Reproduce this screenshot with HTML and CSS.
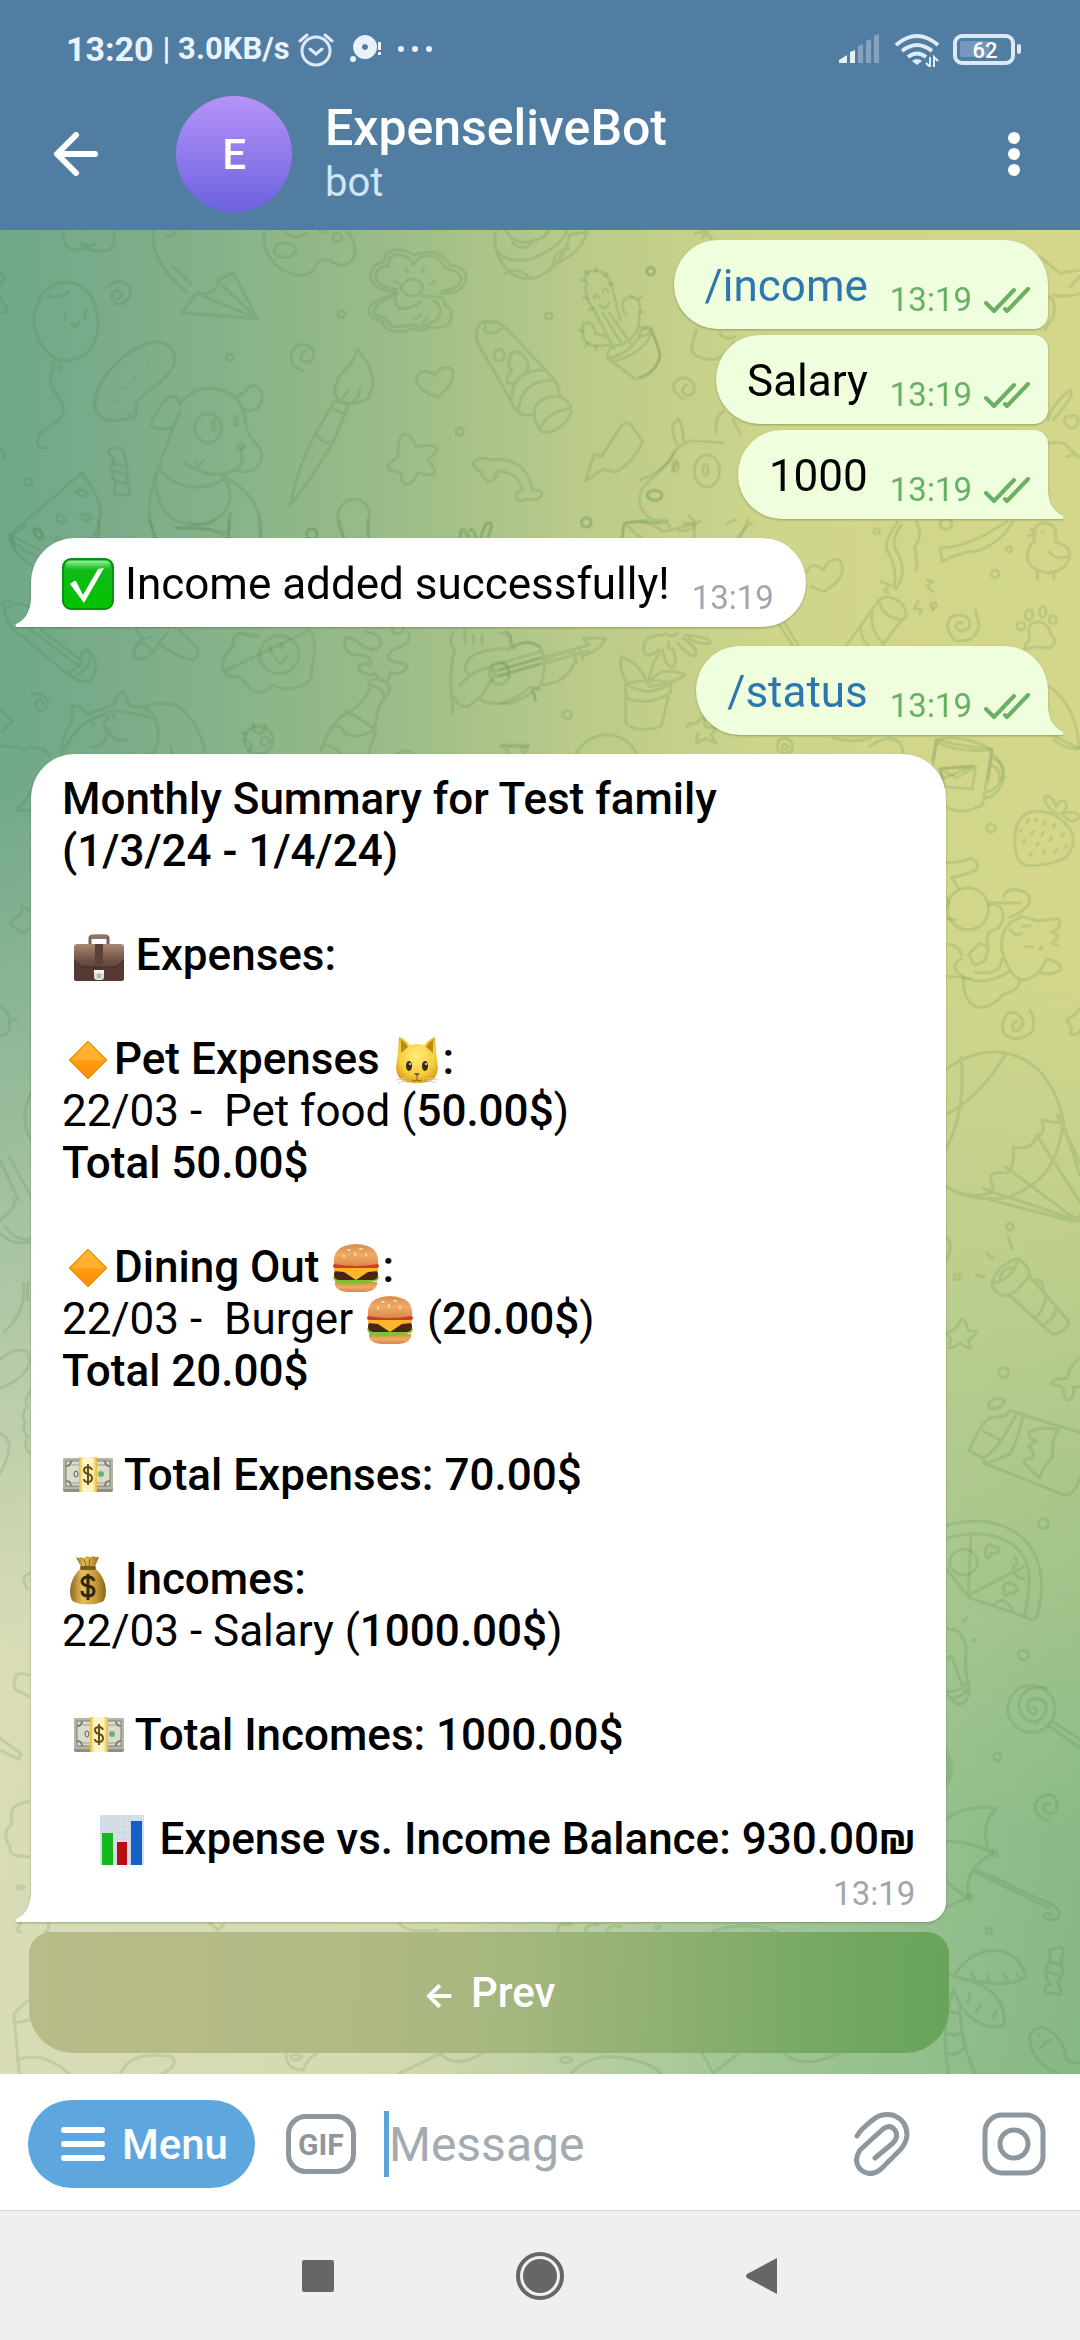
FILE: index.html
```html
<!DOCTYPE html>
<html lang="en">
<head>
<meta charset="utf-8">
<meta name="viewport" content="width=device-width, initial-scale=1">
<title>ExpenseliveBot</title>
<link rel="stylesheet" href="styles.css">
</head>
<body>

<svg class="sprite" width="0" height="0" aria-hidden="true">
  <defs>
    <linearGradient id="g-check" x1="0" y1="0" x2="0" y2="1"><stop offset="0" stop-color="#3fd34a"/><stop offset=".2" stop-color="#10b91a"/><stop offset="1" stop-color="#00c400"/></linearGradient>
    <linearGradient id="g-gloss" x1="0" y1="0" x2="0" y2="1"><stop offset="0" stop-color="#9df0a0"/><stop offset="1" stop-color="#2fc93a" stop-opacity=".2"/></linearGradient>
    <linearGradient id="g-case" x1="0" y1="0" x2="0" y2="1"><stop offset="0" stop-color="#a98871"/><stop offset=".45" stop-color="#6d5045"/><stop offset="1" stop-color="#48302a"/></linearGradient>
    <linearGradient id="g-diamond" x1="0" y1="0" x2="0" y2="1"><stop offset="0" stop-color="#ffb327"/><stop offset="1" stop-color="#ff8a00"/></linearGradient>
    <radialGradient id="g-cat" cx=".5" cy=".4" r=".6"><stop offset="0" stop-color="#ffec7a"/><stop offset=".7" stop-color="#f6cf3c"/><stop offset="1" stop-color="#dba51c"/></radialGradient>
    <linearGradient id="g-bun" x1="0" y1="0" x2="0" y2="1"><stop offset="0" stop-color="#d98d4b"/><stop offset=".5" stop-color="#efab66"/><stop offset="1" stop-color="#d58a48"/></linearGradient>
    <linearGradient id="g-bag" x1="0" y1="0" x2="1" y2="0"><stop offset="0" stop-color="#8f6a1c"/><stop offset=".35" stop-color="#e2bd5c"/><stop offset=".7" stop-color="#c99c3a"/><stop offset="1" stop-color="#8a6519"/></linearGradient>
    <linearGradient id="g-band" x1="0" y1="0" x2="1" y2="0"><stop offset="0" stop-color="#e9b92c"/><stop offset=".25" stop-color="#fdf6cf"/><stop offset=".75" stop-color="#fdf3bd"/><stop offset="1" stop-color="#e9b92c"/></linearGradient>
  </defs>

  <symbol id="e-check" viewBox="0 0 52 52">
    <rect x="1" y="1" width="50" height="50" rx="8" fill="url(#g-check)" stroke="#0a8f14" stroke-width="2"/>
    <rect x="4" y="3" width="44" height="9" rx="4" fill="url(#g-gloss)"/>
    <path d="M8 26l4-3q2-1 3 2l6 12L36 11l6-1L22 45z" fill="#fff"/>
  </symbol>

  <symbol id="e-case" viewBox="0 0 52 52">
    <path d="M17 15V9q0-2 3-2h12q3 0 3 2v6" fill="none" stroke="#7b6259" stroke-width="3"/>
    <path d="M18 7q8-3 16 0v3H18z" fill="#8e7469"/>
    <rect x="1" y="15" width="50" height="37" rx="3" fill="url(#g-case)"/>
    <path d="M1 32l8 7h34l8-7v17q0 3-3 3H4q-3 0-3-3z" fill="#553a32"/>
    <path d="M1 31l8 7h34l8-7" fill="none" stroke="#3a2520" stroke-width="1"/>
    <rect x="22" y="15" width="8" height="20" fill="#5c4138"/>
    <path d="M21 41h10v7q0 3-3 3h-4q-3 0-3-3z" fill="#e4dcd8"/>
    <path d="M21 41h10v3H21z" fill="#f6f2f0"/>
    <rect x="24" y="45" width="4" height="4" fill="#b8b0ac"/>
  </symbol>

  <symbol id="e-diamond" viewBox="0 0 52 52">
    <path d="M26 8L45 27 26 46 7 27z" fill="url(#g-diamond)" stroke="#e8860c" stroke-width="1" stroke-linejoin="round"/>
    <path d="M26 11L42 27H10z" fill="#ffc04a" opacity=".45"/>
  </symbol>

  <symbol id="e-cat" viewBox="0 0 52 52">
    <path d="M8 4q6 2 11 8 7-2 14 0 5-6 11-8l1 15q1 8 2 16-1 12-10 14-11 2-22 0Q6 47 5 35q1-8 2-16z" fill="url(#g-cat)"/>
    <path d="M10 7q5 2 7 7l-7 6zM42 7q-5 2-7 7l7 6z" fill="#b98a1c"/>
    <ellipse cx="18" cy="33" rx="3" ry="5" fill="#3b2a12"/>
    <ellipse cx="34" cy="33" rx="3" ry="5" fill="#3b2a12"/>
    <circle cx="19" cy="31" r="1" fill="#fff"/><circle cx="35" cy="31" r="1" fill="#fff"/>
    <path d="M23 40h6l-3 4z" fill="#7d5a4b"/>
    <path d="M26 44v3M26 47q-3 2-5 0M26 47q3 2 5 0" fill="none" stroke="#8a6412" stroke-width="1"/>
    <path d="M15 45L5 47M16 47l-9 3M37 45l10 2M36 47l9 3" stroke="#d8cfb0" stroke-width="1"/>
  </symbol>

  <symbol id="e-burger" viewBox="0 0 52 52">
    <path d="M5 41h42v3q-2 6-12 7H17Q7 50 5 44z" fill="url(#g-bun)"/>
    <path d="M3 36q3-3 8-2h30q5-1 8 2-1 5-5 4-4 4-8 1-5 4-9 1-5 4-9 0-5 3-8 0-5 1-7-6z" fill="#7cc331"/>
    <rect x="4" y="28" width="44" height="11" rx="5" fill="#4b2413"/>
    <path d="M4 27h44v3l-10 1-12 8-12-8-10-1z" fill="#fbb62a"/>
    <rect x="3" y="23" width="46" height="4" rx="2" fill="#d2392b"/>
    <path d="M4 23Q2 4 26 3q24 1 22 20-22 4-44 0z" fill="url(#g-bun)"/>
    <g fill="#f8dcae"><ellipse cx="19" cy="9" rx="2" ry="1"/><ellipse cx="31" cy="8" rx="2" ry="1"/><ellipse cx="25" cy="13" rx="1" ry="2"/><ellipse cx="36" cy="14" rx="1" ry="2"/><ellipse cx="14" cy="15" rx="1" ry="2"/></g>
  </symbol>

  <symbol id="e-money" viewBox="0 0 52 52">
    <rect x="1" y="11" width="50" height="32" rx="2" fill="#8f8f84"/>
    <rect x="1" y="9" width="50" height="31" rx="1" fill="#b5b6a8"/>
    <rect x="4" y="12" width="44" height="25" fill="#dcdccb" stroke="#7f8075" stroke-width="1"/>
    <path d="M4 17q5 0 5-5M43 12q0 5 5 5M4 32q5 0 5 5M43 37q0-5 5-5" fill="none" stroke="#7f8075" stroke-width="2"/>
    <ellipse cx="14" cy="25" rx="2" ry="3" fill="none" stroke="#5e6058" stroke-width="1"/>
    <circle cx="39" cy="25" r="3" fill="#6fae7d"/>
    <path d="M10 16h7M35 16h8M10 34h7M35 34h8" stroke="#9a9b8e" stroke-width="1"/>
    <rect x="17" y="8" width="18" height="35" fill="url(#g-band)"/>
    <path d="M30 21q-1-3-4-3-4 0-4 3 0 3 4 4t4 4q0 4-4 4t-4-3M26 15v21" fill="none" stroke="#6b4c10" stroke-width="2"/>
  </symbol>

  <symbol id="e-bag" viewBox="0 0 52 52">
    <path d="M14 4q3 2 5 0 3 2 6-1 3 2 6 0 3 2 6 1l-5 12H20z" fill="url(#g-bag)"/>
    <path d="M19 15h14q10 9 11 22 0 10-4 12-14 5-28 0-4-2-4-12 1-13 11-22z" fill="url(#g-bag)"/>
    <rect x="18" y="13" width="16" height="4" rx="2" fill="#7c5a18"/>
    <path d="M22 6l2 7M28 6l-1 7" stroke="#8b671d" stroke-width="1"/>
    <path d="M32 28q-1-4-6-4t-6 4q0 4 6 5t6 5q0 5-6 5t-6-5M26 21v26" fill="none" stroke="#33260f" stroke-width="3"/>
  </symbol>

  <symbol id="e-chart" viewBox="0 0 52 52">
    <rect x="4" y="2" width="44" height="51" fill="#d5dfe8"/>
    <path d="M4 8h44M4 14h44M4 20h44M4 26h44M4 32h44M4 38h44M4 44h44M10 2v50M16 2v50M22 2v50M28 2v50M34 2v50" stroke="#cbd6e1" stroke-width="1"/>
    <rect x="6" y="20" width="11" height="32" fill="#14b71e"/>
    <rect x="21" y="29" width="10" height="23" fill="#b80f14"/>
    <rect x="35" y="8" width="11" height="44" fill="#1560c4"/>
  </symbol>

  <symbol id="i-read" viewBox="0 0 46 26">
    <path d="M2 16l8 8L30 3M21 22l2 2L44 2" fill="none" stroke="currentColor" stroke-width="4" stroke-linecap="round" stroke-linejoin="round"/>
  </symbol>
  <symbol id="i-tail" viewBox="0 0 17 28">
    <path d="M17 0H16C15 13 10 21 1 25Q-1 28 3 28H17z" fill="currentColor"/>
  </symbol>
</svg>

<header class="header">
  <div class="status">
    <span class="status-time">13:20</span>
    <span class="status-rate">| 3.0KB/s</span>
    <svg class="status-notes" width="134" height="36" viewBox="0 0 134 36" aria-hidden="true">
      <g fill="none" stroke="#dfeaf7" stroke-width="3" stroke-linecap="round">
        <circle cx="18" cy="20" r="14"/><path d="M12 18l6 5 6-5M2 10l7-6M34 10l-7-6"/>
      </g>
      <g fill="#eaf1fb">
        <path fill-rule="evenodd" d="M67 4a12 12 0 1 0 .1 0zM67 13a3 3 0 1 1-.1 0z"/>
        <circle cx="55" cy="28" r="3"/><path d="M80 11h3v8h-3zM80 21h3v3h-3z"/>
        <circle cx="103" cy="18" r="3"/><circle cx="117" cy="18" r="3"/><circle cx="131" cy="18" r="3"/>
      </g>
    </svg>
    <svg class="status-signal" width="182" height="36" viewBox="0 0 182 36" role="img" aria-label="Signal, Wi-Fi, battery">
      <g fill="#e6eff9">
        <path d="M0 32v-3l8-5v8zM11 32V21l5-2v13z"/>
        <path opacity=".35" d="M19 32V15l5-2v19zM27 32V10l5-2v24zM35 32V5l5-2v29z"/>
      </g>
      <g fill="none" stroke="#e0ebf8" stroke-width="4">
        <path d="M57 14q21-18 42 0M63 20q15-12 30 0M69 26q9-7 18 0"/>
      </g>
      <path d="M73 30q5-4 10 0l-5 4z" fill="#e0ebf8"/>
      <path d="M91 26v10l-4-4M95 36V26l4 4" fill="none" stroke="#e0ebf8" stroke-width="2"/>
      <rect x="116" y="5" width="58" height="27" rx="7" fill="none" stroke="#dce8f8" stroke-width="4"/>
      <rect x="121" y="10" width="30" height="16" rx="2" fill="#7497bb"/>
      <rect x="178" y="13" width="4" height="10" rx="2" fill="#dce8f8"/>
      <text class="battery-level" x="146" y="27" text-anchor="middle">62</text>
    </svg>
  </div>
  <div class="appbar">
    <button class="icon-button" type="button" aria-label="Back">
      <svg width="44" height="44" viewBox="0 0 44 44"><path d="M22 3L3 22l19 19M4 22h37" fill="none" stroke="#fff" stroke-width="6" stroke-linecap="round" stroke-linejoin="round"/></svg>
    </button>
    <span class="avatar" aria-hidden="true">E</span>
    <div class="peer">
      <h1 class="peer-name">ExpenseliveBot</h1>
      <p class="peer-kind">bot</p>
    </div>
    <button class="icon-button" type="button" aria-label="More options">
      <svg width="12" height="44" viewBox="0 0 12 44" fill="#fff"><circle cx="6" cy="6" r="6"/><circle cx="6" cy="22" r="6"/><circle cx="6" cy="38" r="6"/></svg>
    </button>
  </div>
</header>

<main class="chat">
  <svg class="doodles" viewBox="0 230 1080 1844" preserveAspectRatio="xMidYMin slice" aria-hidden="true">
    <g transform="translate(0 230) scale(.4337 .3333)">
      <path d="M147 5Q140 55 175 60 190 60 195 50 215 70 250 60 270 45 262 5M187 40Q205 55 220 40M-5 125Q20 140 0 165M0 200L18 240Q10 252 -5 248M-5 650Q12 660 8 682"/>
      <path d="M152 157C95 160 72 240 80 295 90 350 118 392 152 392 200 392 228 340 226 275 222 200 195 157 152 157zM112 200Q145 205 157 185M150 247v25M198 242l-3 23M165 280Q172 300 182 278M130 392q-16 10-8 24l10-4 6 6 5-10-6-14M122 415C100 490 155 500 145 550 135 590 90 590 86 630 85 650 92 655 106 654"/>
      <path d="M253 168Q265 150 285 156 307 170 298 200 288 228 268 222 250 200 262 184 276 178 282 196 278 206 270 206"/>
      <path d="M355-5Q340 90 432 187M385 20Q410 15 403-5M398 108l42 52M420 248l34-60Q500 200 502 152L538 128 593 266zM455 190l138 76-91-113"/>
      <path d="M610-5Q600 90 665 128 710 150 728 110 738 75 770 98 800 120 817 80 825 40 795-5M655 0Q675 35 705 12M735 0q8 12 16 0"/>
      <ellipse cx="657" cy="60" rx="25" ry="22"/><ellipse cx="778" cy="22" rx="11" ry="12"/>
      <path d="M915 188Q850 180 855 130 860 100 885 95 890 55 920 60 940 62 955 75 1000 55 1020 80 1035 95 1036 105 1080 110 1074 155 1060 195 1015 190M915 180Q870 170 865 140 868 110 895 108 895 70 925 75 945 80 953 105 970 65 1005 82 1022 95 1025 115 1060 120 1064 150 1055 180 1020 182"/>
      <path d="M933 190Q915 175 935 155 950 140 968 155 982 175 965 192 945 205 933 190zM915 190Q905 215 920 235 945 240 970 215M915 192Q850 210 850 245 855 270 880 272 890 305 915 305 940 305 950 295 975 310 990 292 1040 300 1040 260 1045 235 1025 225 1030 195 990 200L965 195M905 200Q865 220 862 248 868 262 888 262 900 295 920 290 940 290 950 282 975 300 990 280 1010 275 1015 250 1020 225 1000 212M955 268l15-12M975 280l10-18M935 115l5 12M977 115l-5 12M910 155l10 5M1003 155l-12 5"/>
      <path d="M1145-5C1130 60 1165 145 1215 146 1270 145 1310 60 1312 15M1165-5Q1180 45 1220 35 1260 25 1265 0M1145 65Q1180 105 1230 85 1300 45 1310-5M1275 105Q1340 70 1354 5L1312 15M1275 105Q1280 60 1312 55M1165 130Q1185 105 1222 142M1180 38q30 30 45 0"/>
      <path d="M1350 150Q1345 120 1375 122 1400 125 1410 165L1430 270M1352 160Q1345 200 1370 240L1415 355M1435 215Q1445 195 1465 203 1480 220 1475 250L1470 310M1435 215Q1435 245 1445 255M1345 280Q1335 350 1380 348L1405 345M1345 280Q1370 270 1372 310L1400 320M1390 250l45 95M1405 250l50 90M1402 385Q1460 370 1480 300 1495 280 1505 305L1522 375Q1510 440 1465 447L1402 385Q1395 350 1430 345 1460 330 1470 295M1410 395Q1480 375 1502 312M1370 205q5-18 12 0M1390 185q6-18 12 0M1383 225q12 20 22-5"/>
      <path d="M1340 150l10 3M1350 125l6 8M1375 115v8M1400 130l-6 8M1412 160l-8 4M1345 205l10 0M1358 240l9-5M1335 300l10 3M1350 350l5-8M1375 358v-9M1478 200l-6 8M1482 245l-8 0M1455 195l3 9"/>
      <path d="M1100 335C1095 290 1105 272 1128 272 1150 272 1165 290 1175 305L1265 430Q1290 460 1290 500 1320 520 1317 545 1310 580 1280 600 1255 615 1245 600 1232 570 1232 555 1200 560 1190 540zM1118 295Q1120 315 1140 308 1165 295 1158 285 1140 272 1118 280zM1180 370Q1165 400 1180 420 1165 445 1170 460 1190 465 1200 440 1225 420 1215 390 1195 355 1180 370zM1180 505Q1180 420 1255 420M1195 545Q1200 450 1275 450M1232 555Q1230 500 1290 498M1245 600Q1260 545 1317 535"/><ellipse cx="1151" cy="375" rx="12" ry="17"/>
      <path d="M310 560Q240 590 222 545 210 495 245 435 300 345 360 335 405 340 403 395 395 440 340 485 315 510 313 525l0 38-18-12M341 405v3M312 440v3M289 472v3M265 510v3"/>
      <path d="M415 525C440 460 520 460 550 515 575 555 555 600 590 640 615 670 605 725 560 725 545 725 540 720 545 715 520 740 470 740 428 700M415 525Q410 490 390 502 370 520 360 555 345 570 350 588 370 605 400 590L415 545M400 590L365 715Q340 790 345 870L362 930M540 505Q565 490 575 470 590 460 602 485 610 520 590 538 570 545 560 538M450 695Q465 740 490 732M556 655l2 40Q555 715 540 720M365 715Q400 770 450 772 500 770 520 738M360 740Q355 870 445 886 525 875 531 800 530 765 515 740M520 742Q590 790 602 880V930M531 850L525 930M405 893Q500 890 520 925M470 690l-8 10"/>
      <ellipse cx="480" cy="594" rx="31" ry="43"/><ellipse cx="492" cy="587" rx="4" ry="14"/><ellipse cx="545" cy="572" rx="4" ry="15"/><circle cx="556" cy="650" r="8"/>
      <path d="M700 422Q665 410 672 370 682 335 710 345 732 365 720 390 705 405 693 388 692 370 705 362"/>
      <path d="M824 358Q815 400 785 435 760 490 785 515L770 515 727 612Q690 700 668 828 700 780 768 638L803 526 785 515Q820 530 848 505 880 440 824 358zM727 612Q740 640 768 638M765 530Q780 550 797 550M783 515Q800 490 803 480M812 520Q830 500 830 475"/>
      <path d="M1010 502Q960 480 960 445 970 410 1005 435 1020 400 1042 418 1055 450 1010 502zM933 612Q950 615 960 650 1010 640 1007 660 1000 680 985 690 1010 725 1000 732 985 740 965 728 950 765 937 763 925 760 925 728 890 720 895 705 905 690 918 682 915 620 933 612z"/>
      <path d="M1110 725Q1085 710 1095 692 1110 680 1130 690 1210 675 1228 780 1255 780 1247 800 1235 815 1215 808 1190 820 1190 800 1190 785 1205 780 1195 725 1145 722 1145 755 1125 753 1112 745 1110 725zM1350 752L1370 672 1387 680 1430 592Q1445 570 1455 585L1482 635Q1465 690 1420 727L1390 718z"/>
      <path d="M252 675Q245 655 265 655 285 645 287 680 298 720 292 750 300 770 298 795L265 795Q262 775 268 758 250 730 262 685zM260 700l30 10M256 720l37 15M265 755l25 5"/>
      <path d="M22 915L187 730Q230 790 232 850 228 900 210 930M22 915L35 960M22 915L90 960M133 850q18 10 17 25-12 10-17-5zM185 855q20-8 25 10-12 20-25-10zM80 900q14-12 18 15-12 25-18-15zM175 785q15-10 28 5-15 20-28-5zM130 935v-14l15 14"/>
      <path d="M795 930Q760 850 800 812 840 795 853 850 840 900 855 930M1062 930q-2-35 12-30l10 25M1085 900q10-8 14 25M1105 930l15-48q10-10 14 5l-8 43M1440 880Q1490 865 1540 872M1440 880q-10 50 0 60M1445 885q30 40 50 50M1555 670C1520 750 1470 750 1475 820 1480 850 1500 870 1520 880M1560 700q-8 10-10 25"/>
      <g><ellipse cx="530" cy="382" rx="8" ry="10"/><ellipse cx="787" cy="253" rx="8" ry="10"/><ellipse cx="1265" cy="258" rx="8" ry="10"/><ellipse cx="1500" cy="124" rx="9" ry="11"/><ellipse cx="1060" cy="605" rx="9" ry="11"/><ellipse cx="66" cy="756" rx="8" ry="11"/><ellipse cx="719" cy="912" rx="12" ry="15"/><ellipse cx="1352" cy="877" rx="11" ry="15"/><ellipse cx="1509" cy="795" rx="17" ry="15"/></g>
    </g>

    <g transform="translate(640 220) scale(.3333)">
      <circle cx="33" cy="153" r="12"/><path d="M0 320Q40 320 60 400 60 450 0 472M0 350Q30 345 35 325M130 538Q90 510 105 485 135 460 160 490 170 525 140 528 115 510 140 495M170 330Q140 400 175 410 240 440 280 370M240 340q20 25 45 10"/>
      <path d="M0 780Q70 750 90 720 110 670 160 662L250 668M115 680Q80 620 115 597 130 620 130 660M230 640Q220 590 250 575M300 640l-20-40M0 905Q60 910 80 908L90 920M130 910Q170 910 180 905M145 885l25 25q-20 30-55 20M260 910l25-10M300 960Q310 920 335 910"/>
      <ellipse cx="201" cy="753" rx="38" ry="48"/><ellipse cx="197" cy="750" rx="8" ry="16"/><ellipse cx="107" cy="738" rx="8" ry="16"/><path d="M25 820Q40 805 65 820 70 840 45 843 15 835 25 820z"/>
      <path d="M1200 110L1260 160 1320 150M1230 230Q1250 250 1240 290L1215 330M1240 225Q1280 235 1320 220M1290 200l30-30M1225 600Q1230 560 1290 510 1310 520 1240 600M1275 610q-5-25 15-20 20-10 25 10-5 30-25 25zM1225 670Q1280 660 1290 690 1320 700 1280 710M1290 690l40 30M165 40l40-5-20 20M190 30l25 25"/>
    </g>

    <g transform="translate(500 520) scale(.37 .3333)">
      <path d="M335 10l-5 50M340 10Q400 -5 440 35 500 20 525 10V55M640 55Q660 30 670 0M830 155Q840 120 875 150 890 110 918 120 945 170 875 215L840 200M755 315l35 60M770 310l35 65"/>
      <path d="M1075 5Q1040 60 1045 90 1075 140 1065 200M1085 15Q1055 60 1070 90 1105 150 1070 208M1125 5Q1145 50 1120 80 1130 120 1125 150M1190 85Q1250 80 1310 45L1370 5M1190 85l5 40Q1230 100 1300 90 1360 60 1385 5M1030 185l25 10-15 15 10 10M1155 180l15 5-15 15 15 15M1130 245l-10 20 20 5-5 12M1170 265v5"/>
      <path d="M1025 240Q1050 220 1085 250 1110 290 1085 300L1035 375M1025 240Q1030 290 1085 300M1025 240L935 378M1005 280Q1000 330 1035 370M975 320q0 40 20 55"/>
      <path d="M1232 362Q1200 330 1215 295 1235 280 1260 290 1280 315 1260 330 1240 340 1232 320 1235 305 1250 308M1232 362Q1285 370 1295 315L1285 270"/>
      <path d="M1430 360Q1410 390 1420 388L1450 380 1485 385Q1510 365 1490 345 1480 305 1452 305 1425 310 1430 340z"/><ellipse cx="1408" cy="318" rx="11" ry="12"/><ellipse cx="1430" cy="285" rx="10" ry="16"/><ellipse cx="1467" cy="276" rx="9" ry="16"/><ellipse cx="1494" cy="299" rx="10" ry="12"/>
      <path d="M1445 65Q1435 10 1475 8 1510 15 1500 65 1545 80 1540 110 1530 155 1480 158 1425 150 1425 105 1428 75 1445 65zM1450 25l-15 5 13 10-20 8M1483 95Q1500 120 1535 110M1452 158v20M1495 158l3 20"/><circle cx="1467" cy="38" r="2"/>
      <path d="M340 485Q320 440 328 410 380 430 400 495 410 470 440 455 480 450 500 465 470 490 405 500M430 400Q400 450 403 500M340 490Q335 510 345 535 400 560 460 520L463 485M345 490Q400 475 455 487 465 500 400 515 345 505 345 490zM340 530L340 610Q370 640 435 620L455 530M430 390Q380 430 390 370 400 345 440 345M440 390Q450 450 470 440 480 410 465 385M480 370Q530 430 530 395 520 370 495 355M500 345Q570 350 568 370 540 375 510 355M445 340q18 15 35 0M455 365v20"/>
      <path d="M0 340Q35 340 35 385 70 350 110 385 130 430 110 495 40 560 0 550M0 430Q30 430 25 470M0 450L240 375 225 355 285 355Q275 390 220 410M0 468L240 392M120 420Q200 380 205 410 190 490 110 495M200 390l8 40M215 385l8 35M90 505l5 35"/>
      <path d="M205 700Q240 640 300 645 350 655 368 700M5 675h70l-20 12 8 14M508 620Q500 610 530 610l20-20 5 30 30 5-15 20 15 25-30-15-25 15 5-30M750 675Q750 655 775 655 795 665 790 690 770 710 750 690zM1000 680Q1020 660 1050 655 1090 660 1088 700M900 655Q960 670 1000 655M1180 660Q1250 640 1330 690L1320 780M1180 660L1165 780M1330 700Q1370 740 1355 780M1190 745l90-8-85 40zM1485 500Q1560 560 1565 685L1500 650"/>
      <g><circle cx="233" cy="8" r="13"/><circle cx="1018" cy="34" r="8"/><circle cx="1375" cy="88" r="8"/><circle cx="1338" cy="162" r="11"/><circle cx="182" cy="584" r="12"/><circle cx="1172" cy="256" r="8"/><circle cx="770" cy="680" r="8"/><circle cx="1205" cy="12" r="16"/></g>
    </g>

    <g transform="translate(0 520) scale(.3444 .3333)">
      <path d="M8 245Q20 330 60 345L195 460Q230 495 265 480 285 450 275 415L250 390M8 245Q50 245 85 260M12 262Q30 265 38 252M90 330L230 440M120 330L240 425M195 460Q240 440 235 400 250 385 262 395 270 440 215 470"/>
      <path d="M395 330L415 355Q380 385 392 412 430 430 460 370L490 335M405 370Q430 370 435 390M440 350l-15 5M462 372Q510 410 560 420 590 395 560 370L520 330"/>
      <path d="M650 455Q640 420 660 400 680 380 680 350 700 330 730 350 750 335 750 350M900 330Q925 370 905 440 910 490 870 500 830 515 790 495 760 530 730 510 710 480 690 470 655 470 650 455z"/><circle cx="811" cy="404" r="57"/><path d="M782 380l8 20M815 370l6 15M800 415q15 30 30-5"/>
      <path d="M1060 335Q1110 340 1105 375 1090 400 1050 375 1010 340 1000 360 1000 410 1050 405 1080 410 1075 435 1040 425 1042 450 1070 470 1090 460L1100 478M1185 335Q1200 370 1150 385 1110 410 1140 425 1190 430 1180 445 1160 470 1135 455L1125 485M1070 490Q1075 475 1095 478 1130 485 1132 505 1125 530 1118 530 1110 500 1070 495zM1075 505Q1050 560 990 590 950 630 928 702M1118 530Q1085 580 1090 640L1068 702M960 620Q990 610 1000 640 1040 660 1085 630M1005 570l80 55M938 672Q970 680 990 700"/>
      <path d="M1315 335Q1300 370 1320 390 1300 470 1315 550L1313 580M1470 335Q1490 350 1480 365 1490 380 1470 385 1380 390 1360 420 1340 450 1365 465M1350 330v40M1375 345v25M1400 345v28M1335 497Q1380 440 1430 445 1450 460 1420 490 1390 550 1350 560 1330 560 1318 530M1475 390Q1530 350 1568 380M1390 535Q1450 580 1540 500L1568 510M1420 440L1568 395M1430 455L1568 412M1440 470L1568 430M1545 510l10 30"/><ellipse cx="1450" cy="460" rx="28" ry="34"/>
      <path d="M180 702Q175 650 210 605L208 560Q225 550 255 582L330 555Q340 520 355 515 370 530 375 558L420 562Q460 590 460 650 455 690 440 702M185 690Q230 600 300 585 320 560 435 592M415 560Q470 540 520 560 580 610 597 702M315 590q-20 20-5 40 0 50-45 50M315 630q10 40 50 30M266 605l5 10M327 583l5 12M95 523Q130 515 140 550 135 575 115 573 95 555 110 540 125 535 125 553M0 570l38 35-32 28M0 680Q40 675 70 690 110 670 145 705M495 680l5 20"/>
      <circle cx="751" cy="660" r="42"/><circle cx="770" cy="664" r="13"/><path d="M733 630q20 20 35 0M712 660q30 15 10 35M735 612l3 12M770 614l-4 12M705 640l10 3"/>
      <path d="M1150 702Q1180 685 1200 702M1455 680h80l-10 15M1465 685l15 15M27 55L70 20M27 55Q50 120 100 140M25 50Q60 90 110 110M435 0Q440 30 450 58M665 0v58M750 0l8 58M515 25Q600 20 660 40M545 5Q590 25 625 0M985 0l15 58M1070 0v55M285 0q10 30-5 58M1340 58Q1330 20 1345 30l15 25M1365 30q10 0 15 25M1395 58l15-45q15-10 18 5l-18 45M97 30q8-10 15 0 20 15 8 30-20-5-23-30z"/><circle cx="905" cy="42" r="16"/><circle cx="1155" cy="325" r="16"/>
    </g>

    <g transform="translate(0 740) scale(.4591 .3333)">
      <path d="M35 210Q60 180 68 150M35 210q15 5 33 0M68 515L48 498 45 525Q20 540 25 555L50 580 68 560M0 800Q20 810 20 845L35 835M20 845Q25 890 0 885M68 1060Q45 1120 60 1180L68 1200M0 1260L40 1380M20 1250L68 1370"/>
    </g>
    <g transform="translate(0 1200) scale(.4591 .3333)">
      <path d="M0 60Q40 20 30 0M10 80Q40 130 68 115M0 100Q30 140 68 125M50 250Q60 330 10 395M60 250v50M0 480Q30 440 60 455 80 520 0 565M68 570Q50 600 60 620 45 640 55 670 45 690 60 710 50 740 65 760M0 700Q40 720 0 820M68 1120Q40 1130 60 1165"/>
    </g>

    <g transform="translate(900 740) scale(.3333 .4464)">
      <path d="M108 5Q180 30 275 22L248 145Q190 170 136 150M108 5L97 45M108 0Q200 15 275 22M275 40Q320 50 310 90 290 130 252 130M272 55Q305 65 298 95 280 118 255 115M120 65l107-5-10 50-80-5zM120 65l50 20 57-25M460 0Q510 25 540 18"/>
      <path d="M345 215Q350 165 400 160 470 155 515 205 530 240 495 265 430 285 375 280 340 270 345 215zM470 165Q430 145 435 128 455 120 468 150 485 125 500 145 495 165 480 165 540 155 535 175 520 190 490 170M380 185l5-6M405 182l5-5M430 190l6-8M360 205l5-4M395 210l5-5M425 215l4-8M460 195l6-6M370 230l5-5M410 235l6-5M450 225l5-8M485 215l6-5M390 258l5-3M430 255l5-6M465 250l5-4M495 240l5-4"/>
      <path d="M136 275Q190 275 210 265 240 270 230 290 210 300 155 308L175 332M136 350q15 10 10 20M136 400l30 3M136 458Q170 455 185 480M136 530Q180 530 205 535"/><ellipse cx="204" cy="378" rx="62" ry="47"/>
      <path d="M265 370Q300 360 310 390 310 425 270 428 255 445 265 470M270 365h90M310 350Q320 330 360 337 400 345 385 370 360 390 325 398M365 397Q300 410 305 470 330 535 370 538 420 530 440 490M360 395L415 405 478 400Q485 425 455 430L475 440 455 455 473 460M440 490Q490 500 482 515 450 530 415 520M325 520Q240 560 170 520 155 500 185 490M205 480l35-25 25 10-10 30-30 10zM190 535Q190 600 250 600 290 590 310 570 360 560 358 540M330 425l20 12 15-5M370 418l20-3M375 463h22M420 468l8-5M225 520q80 10 80-30"/>
      <path d="M390 605Q410 630 395 655 350 680 315 660 295 635 325 612 360 605 370 635 360 655 340 650 330 635 350 630M540 600L525 615 500 628 515 645 510 660 530 660 540 650"/>
      <path d="M136 740C250 670 440 680 490 850 480 950 420 1000 320 1025 220 1035 170 1015 136 1000M183 710Q200 830 136 920M318 703Q240 800 136 840M490 855Q460 860 425 850 440 885 410 885 400 920 340 912 345 960 320 970 275 965 270 980 285 1010 270 1015 240 1025 180 1015M410 885L540 1035M315 955L530 1075M250 1005L540 1078M270 1030L520 1078M470 840L540 945M480 838L540 975M515 1080l25-15"/>
      <path d="M275 1215Q300 1170 355 1162 390 1180 388 1200 350 1240 315 1245 280 1240 275 1215zM300 1205Q310 1180 345 1182M275 1215Q330 1215 355 1165M330 1245L455 1330Q495 1330 507 1303L388 1200M395 1210Q430 1205 430 1230M405 1295Q430 1280 437 1250M430 1310Q460 1300 468 1275M325 1115l12 25M260 1150l18 12M230 1198l22 5M136 1110q30 20 0 60"/>
      <path d="M185 1297Q200 1300 205 1325 235 1320 228 1330L205 1345 212 1360Q200 1365 180 1350 160 1365 148 1360L152 1340 136 1330 165 1320zM540 1385Q510 1400 500 1430 450 1430 458 1445 490 1445 492 1460 490 1475 508 1480 525 1470 520 1450L540 1448M265 1490Q280 1465 315 1480 300 1505 265 1495z"/>
      <g><ellipse cx="273" cy="197" rx="13" ry="9"/><ellipse cx="329" cy="1090" rx="10" ry="8"/><ellipse cx="171" cy="1203" rx="9" ry="7"/><ellipse cx="311" cy="1417" rx="15" ry="11"/></g>
    </g>

    <g transform="translate(900 1400) scale(.3333 .4337)">
      <path d="M265 42Q230 70 208 118L250 135M265 42l50-5M330 25L540 75M315 37L330 25 370 32Q360 80 330 125L255 148 250 135Q300 110 350 30M250 145L490 218Q520 225 540 180M250 72l50 20M385 75Q420 60 475 68 450 100 460 130 430 150 418 180L372 145Q380 130 395 135 410 125 385 105L410 95Q385 90 385 75z"/>
      <path d="M136 290C260 260 430 290 425 440 415 510 405 515 375 500L205 455 136 385M136 320C260 290 410 320 385 440L375 500M213 308L205 450 370 385M345 362q15 20-5 20 0 30 35 30M280 475q30-30 58 10M257 340q10-12 20-3 20 0 22 10-15 12-25 5-5 18-17 8zM310 430q10-12 25-6 20 5 18 15-15 12-25 5-5 10-15 5z"/><ellipse cx="191" cy="374" rx="41" ry="30"/>
      <path d="M136 528Q190 525 200 575 190 610 205 655 215 690 180 702 150 695 136 665M136 600L155 590 190 665M148 685Q190 690 208 658M145 672Q180 675 203 648M190 510l10-8M218 555l8-3"/>
      <ellipse cx="394" cy="712" rx="71" ry="54"/><path d="M440 665Q370 655 355 700 365 745 410 742 445 725 438 700 415 680 385 695 380 725 405 725 418 712 400 708M447 752L540 802M458 742L540 782M136 805Q175 850 136 892M136 820q20 30 0 60M445 970Q400 960 405 930 430 905 460 912 480 935 465 950 440 960 430 940 435 925 450 932"/>
      <path d="M136 968Q200 930 288 942 240 980 265 1035L280 1045M136 1018Q210 1015 280 1045 190 1080 205 1145M136 1105Q160 1130 205 1147L136 1170M222 1080L460 1165Q490 1180 470 1197 440 1200 430 1190 435 1180 455 1187M222 1088L450 1172"/><circle cx="285" cy="1045" r="7"/><circle cx="210" cy="1147" r="7"/>
      <path d="M165 1325C220 1250 360 1250 375 1330 340 1355 250 1345 175 1332 240 1340 320 1370 312 1440 270 1460 190 1430 162 1360M215 1320l8 15M260 1325l10 18M310 1325l15 12M350 1325l15 8M210 1370l-8 20M240 1395l-10 15M280 1425l8-15M150 1325l18 5M160 1360Q120 1450 145 1552M180 1400Q180 1480 225 1552M150 1410l30 5M140 1460q30 10 45-5M136 1505q40 10 60-15"/>
      <path d="M450 1280Q440 1262 465 1265 495 1255 490 1280L480 1290Q500 1320 470 1345 490 1360 478 1372 450 1365 435 1368 430 1350 450 1348 425 1320 452 1288zM450 1295l35 10M440 1318l45 10M390 1480Q380 1450 430 1447 490 1465 500 1520 520 1530 540 1530M390 1480Q400 1530 470 1550M420 1495l30-20M415 1462v4"/>
      <g><ellipse cx="430" cy="285" rx="15" ry="11"/><ellipse cx="370" cy="588" rx="15" ry="11"/><ellipse cx="292" cy="823" rx="12" ry="9"/><ellipse cx="267" cy="1224" rx="9" ry="7"/></g>
    </g>

    <g transform="translate(0 1660) scale(.6887 .3333)">
      <path d="M42 45Q20 30 22 65 15 90 35 100L42 110M0 235L30 280 28 298 0 270M42 425Q10 430 18 490 0 520 15 560 10 590 42 590M42 1020L20 1060 28 1240M20 1090l22-10M25 1200Q60 1170 100 1240M175 1240Q190 1170 250 1190 260 1220 235 1240M415 1180Q415 1230 440 1230 445 1200 460 1180M580 1240L640 1180Q660 1230 700 1180M830 1240Q850 1190 890 1190 940 1200 960 1240M1020 1180L1035 1240 1070 1185M1140 1180Q1160 1230 1220 1180M30 790Q20 820 30 815M70 790Q72 815 65 815M305 790l12 20 8-15M580 790Q590 820 635 810M810 815q-2-30 20-20M850 815q0-25 18-20M880 815q5-25 22-15M1035 815Q1080 780 1130 815"/>
      <circle cx="30" cy="682" r="5"/><circle cx="955" cy="802" r="4"/><circle cx="822" cy="1200" r="8"/><circle cx="430" cy="1192" r="8"/>
    </g>
  </svg>

  <section class="thread">
    <div class="group group--out">
      <article class="bubble bubble--out bubble--first">
        <p class="text"><a class="command" href="#income">/income</a></p>
        <span class="meta"><time>13:19</time><svg width="46" height="26" role="img" aria-label="Read"><use href="#i-read"/></svg></span>
      </article>
      <article class="bubble bubble--out">
        <p class="text">Salary</p>
        <span class="meta"><time>13:19</time><svg width="46" height="26" role="img" aria-label="Read"><use href="#i-read"/></svg></span>
      </article>
      <article class="bubble bubble--out bubble--last">
        <p class="text">1000</p>
        <span class="meta"><time>13:19</time><svg width="46" height="26" role="img" aria-label="Read"><use href="#i-read"/></svg></span>
        <svg class="tail" width="17" height="28" aria-hidden="true"><use href="#i-tail"/></svg>
      </article>
    </div>

    <div class="group">
      <article class="bubble bubble--in">
        <p class="text"><svg class="emoji" role="img" aria-label="Done"><use href="#e-check"/></svg> Income added successfully!</p>
        <span class="meta"><time>13:19</time></span>
        <svg class="tail" width="17" height="28" aria-hidden="true"><use href="#i-tail"/></svg>
      </article>
    </div>

    <div class="group group--out">
      <article class="bubble bubble--out bubble--first bubble--last">
        <p class="text"><a class="command" href="#status">/status</a></p>
        <span class="meta"><time>13:19</time><svg width="46" height="26" role="img" aria-label="Read"><use href="#i-read"/></svg></span>
        <svg class="tail" width="17" height="28" aria-hidden="true"><use href="#i-tail"/></svg>
      </article>
    </div>

    <div class="reply">
      <article class="bubble bubble--in bubble--summary">
        <div class="summary">
          <p><b>Monthly Summary for Test family
(1/3/24 - 1/4/24)</b></p>
          <p> <svg class="emoji" role="img" aria-label="Briefcase"><use href="#e-case"/></svg><b> Expenses:</b></p>
          <p><svg class="emoji" role="img" aria-label="Diamond"><use href="#e-diamond"/></svg><b>Pet Expenses <svg class="emoji" role="img" aria-label="Cat"><use href="#e-cat"/></svg>:</b>
22/03 -  Pet food (<b>50.00$</b>)
<b>Total 50.00$</b></p>
          <p><svg class="emoji" role="img" aria-label="Diamond"><use href="#e-diamond"/></svg><b>Dining Out <svg class="emoji" role="img" aria-label="Burger"><use href="#e-burger"/></svg>:</b>
22/03 -  Burger <svg class="emoji" role="img" aria-label="Burger"><use href="#e-burger"/></svg> (<b>20.00$</b>)
<b>Total 20.00$</b></p>
          <p><svg class="emoji" role="img" aria-label="Banknotes"><use href="#e-money"/></svg><b> Total Expenses: 70.00$</b></p>
          <p><svg class="emoji" role="img" aria-label="Money bag"><use href="#e-bag"/></svg><b> Incomes:</b>
22/03 - Salary (<b>1000.00$</b>)</p>
          <p> <svg class="emoji" role="img" aria-label="Banknotes"><use href="#e-money"/></svg><b> Total Incomes: 1000.00$</b></p>
          <p class="balance"><svg class="emoji" role="img" aria-label="Chart"><use href="#e-chart"/></svg><b> Expense vs. Income Balance: 930.00₪</b></p>
        </div>
        <span class="meta"><time>13:19</time></span>
        <svg class="tail" width="17" height="28" aria-hidden="true"><use href="#i-tail"/></svg>
      </article>
      <button class="prev" type="button"><span class="prev-arrow">←</span> Prev</button>
    </div>
  </section>
</main>

<form class="composer">
  <button class="menu" type="button">
    <svg width="44" height="34" viewBox="0 0 44 34" aria-hidden="true"><path d="M3 3h38M3 17h38M3 31h38" stroke="#fff" stroke-width="6" stroke-linecap="round"/></svg>
    Menu
  </button>
  <button class="gif" type="button">GIF</button>
  <label class="field">
    <span class="caret"></span>
    <input class="input" type="text" placeholder="Message" aria-label="Message">
  </label>
  <button class="icon-button" type="button" aria-label="Attach">
    <svg width="56" height="64" viewBox="0 0 56 64"><path d="M3 24Q6 18 18 8.500Q28 0 40 3.500Q53 9 53 23Q52 32 46 38L27 57Q16 66 6 57Q-1 49 6 38L29 17Q36 12 41 18Q45 25 39 31L21 46" fill="none" stroke="#8f979e" stroke-width="5" stroke-linecap="round" stroke-linejoin="round"/></svg>
  </button>
  <button class="icon-button" type="button" aria-label="Record video">
    <svg width="64" height="64" viewBox="0 0 64 64" fill="none" stroke="#8f979e" stroke-width="5"><rect x="3" y="3" width="58" height="58" rx="17"/><circle cx="32" cy="32" r="14"/></svg>
  </button>
</form>

<nav class="navbar" aria-label="System">
  <button class="icon-button" type="button" aria-label="Recent apps"><svg width="50" height="50" viewBox="0 0 50 50"><rect x="9" y="9" width="32" height="32" rx="2" fill="#666"/></svg></button>
  <button class="icon-button" type="button" aria-label="Home"><svg width="50" height="50" viewBox="0 0 50 50"><circle cx="25" cy="25" r="22" fill="none" stroke="#666" stroke-width="4"/><circle cx="25" cy="25" r="17" fill="#666"/></svg></button>
  <button class="icon-button" type="button" aria-label="Back"><svg width="50" height="50" viewBox="0 0 50 50"><path d="M40 7v36L10 27q-2-2 0-4z" fill="#666"/></svg></button>
</nav>

</body>
</html>
```
FILE: styles.css
```css
* {
  box-sizing: border-box;
}

body {
  display: flex;
  flex-direction: column;
  min-height: 100vh;
  margin: 0;
  background: #fff;
  color: #000;
  font-family: Roboto, "Noto Sans", sans-serif;
}

h1,
p {
  margin: 0;
}

b {
  font-weight: 500;
}

button {
  border: 0;
  padding: 0;
  background: none;
  font: inherit;
  cursor: pointer;
}

svg {
  flex: none;
}

.sprite {
  position: absolute;
}

.icon-button {
  display: flex;
  flex: none;
}

/* Header */

.header {
  background: #517da2;
  color: #fff;
}

.status {
  display: flex;
  align-items: center;
  height: 78px;
  padding: 19px 59px 0 66px;
  color: #eaf3fd;
  font-weight: 700;
  white-space: nowrap;
}

.status-time {
  font-size: 34px;
}

.status-rate {
  margin-left: 9px;
  font-size: 31px;
}

.status-notes {
  margin-left: 8px;
}

.status-signal {
  margin-left: auto;
}

.battery-level {
  fill: #fff;
  font-size: 22px;
  font-weight: 500;
}

.appbar {
  display: flex;
  align-items: center;
  height: 152px;
  padding: 0 60px 0 54px;
}

.avatar {
  display: flex;
  flex: none;
  align-items: center;
  justify-content: center;
  width: 116px;
  height: 116px;
  margin: 0 33px 0 78px;
  border-radius: 50%;
  background: linear-gradient(#b694f9, #6c61df);
  font-size: 42px;
  font-weight: 500;
}

.peer {
  flex: 1;
  min-width: 0;
}

.peer-name {
  font-size: 50px;
  font-weight: 500;
  line-height: 58px;
}

.peer-kind {
  color: #cfe5fa;
  font-size: 40px;
  line-height: 52px;
}

/* Chat */

.chat {
  position: relative;
  flex: 1;
  overflow: hidden;
  background: linear-gradient(90deg, #70a889 0, #7cad89 12%, #9bbc89 36%, #bbcb8a 54%, #cfd58b 72%, #d4d78b 100%);
}

.chat::before {
  content: "";
  position: absolute;
  inset: 0;
  background: linear-gradient(100deg, #dbddbb 0, #d5dab0 50%, #a3c695 75%, #86b886 100%);
  -webkit-mask-image: linear-gradient(190deg, transparent 36%, #000 79%);
  mask-image: linear-gradient(190deg, transparent 36%, #000 79%);
}

.doodles {
  position: absolute;
  top: 0;
  left: 0;
  width: 100%;
  height: 100%;
  fill: none;
  stroke: rgba(60, 110, 50, 0.14);
  stroke-width: 3px;
  stroke-linecap: round;
  stroke-linejoin: round;
}

.doodles * {
  vector-effect: non-scaling-stroke;
}

.thread {
  position: relative;
  display: flex;
  flex-direction: column;
  gap: 19px;
  padding: 10px 32px 21px 31px;
}

.group {
  display: flex;
  flex-direction: column;
  align-items: flex-start;
  gap: 6px;
}

.group--out {
  align-items: flex-end;
}

.bubble {
  position: relative;
  display: flex;
  align-items: flex-end;
  gap: 22px;
  max-width: 90%;
  padding: 20px 32px 9px 31px;
  background: #fff;
  color: #000;
  filter: drop-shadow(0 1px 1px rgba(40, 70, 20, 0.35));
}

.bubble--in {
  border-radius: 44px 44px 44px 0;
}

.bubble--out {
  padding-right: 18px;
  border-radius: 44px 14px 14px 44px;
  background: #effedd;
}

.bubble--first {
  border-top-right-radius: 44px;
}

.bubble--last {
  border-bottom-right-radius: 0;
}

.tail {
  position: absolute;
  bottom: 0;
  left: -16px;
  color: #fff;
}

.bubble--out .tail {
  right: -16px;
  left: auto;
  color: #effedd;
  transform: scaleX(-1);
}

.text {
  margin-bottom: 8px;
  font-size: 44px;
  line-height: 52px;
}

.command {
  color: #2c77b0;
  text-decoration: none;
}

.meta {
  display: flex;
  flex: none;
  align-items: center;
  gap: 12px;
  color: #9fa6ae;
  font-size: 33px;
  line-height: 40px;
}

.bubble--out .meta {
  color: #68b062;
}

.emoji {
  width: 52px;
  height: 52px;
  vertical-align: top;
}

.reply {
  width: 90%;
}

.bubble--summary {
  flex-direction: column;
  align-items: stretch;
  gap: 9px;
  max-width: none;
  padding: 19px 31px 8px;
  border-bottom-right-radius: 20px;
}

.bubble--summary .meta {
  align-self: flex-end;
}

.summary {
  display: flex;
  flex-direction: column;
  gap: 52px;
  font-size: 44px;
  line-height: 52px;
}

.summary p {
  white-space: pre-wrap;
}

.summary .balance {
  text-align: right;
}

.prev {
  display: block;
  width: calc(100% + 5px);
  height: 121px;
  margin: 10px -3px 0 -2px;
  border-radius: 22px 22px 44px 44px;
  background: linear-gradient(93deg, #b9bb89 0, #b1b985 35%, #a3b67d 54%, #88ae6c 74%, #70a75f 90%, #69a45b 100%);
  color: #fff;
  font-size: 42px;
  font-weight: 500;
}

.prev-arrow {
  margin-right: 5px;
  font-family: Inter, "DejaVu Sans", sans-serif;
  font-size: 34px;
  font-weight: 700;
}

/* Composer */

.composer {
  display: flex;
  align-items: center;
  height: 137px;
  padding: 4px 34px 0 28px;
  border-bottom: 1px solid #d4d4d4;
  background: #fff;
}

.menu {
  display: flex;
  flex: none;
  align-items: center;
  gap: 17px;
  height: 88px;
  padding: 0 27px 0 33px;
  border-radius: 44px;
  background: #5ea6de;
  color: #fff;
  font-size: 42px;
  font-weight: 500;
}

.gif {
  flex: none;
  width: 70px;
  height: 60px;
  margin: 0 28px 0 31px;
  border: 5px solid #8f979e;
  border-radius: 20px;
  color: #8f979e;
  font-size: 30px;
  font-weight: 700;
}

.field {
  display: flex;
  flex: 1;
  align-items: center;
  min-width: 0;
}

.caret {
  flex: none;
  width: 5px;
  height: 66px;
  background: #5ba3dc;
}

.input {
  flex: 1;
  min-width: 0;
  height: 66px;
  padding: 0;
  border: 0;
  outline: 0;
  background: none;
  color: #000;
  font: 48px Roboto, "Noto Sans", sans-serif;
}

.input::placeholder {
  color: #a3abb2;
  opacity: 1;
}

.composer .icon-button + .icon-button {
  margin-left: 72px;
}

/* System navigation */

.navbar {
  display: flex;
  align-items: center;
  justify-content: center;
  gap: 172px;
  height: 129px;
  background: #efefef;
}
```
